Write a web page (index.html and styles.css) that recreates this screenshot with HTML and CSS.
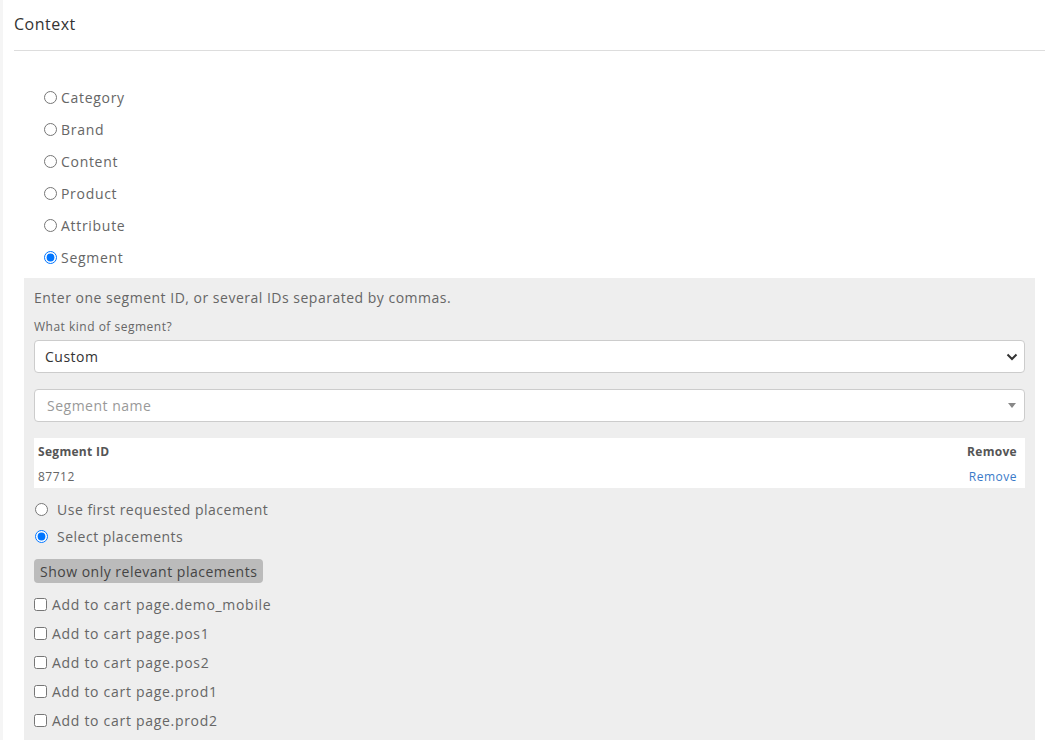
FILE: index.html
```html
<!DOCTYPE html>
<html>
<head>
<meta charset="utf-8">
<link rel="stylesheet" href="styles.css">
</head>
<body>
<div class="page">
  <div class="header">Context</div>
  <div class="types">
    <label class="type"><input type="radio" name="ctx"><span>Category</span></label>
    <label class="type"><input type="radio" name="ctx"><span>Brand</span></label>
    <label class="type"><input type="radio" name="ctx"><span>Content</span></label>
    <label class="type"><input type="radio" name="ctx"><span>Product</span></label>
    <label class="type"><input type="radio" name="ctx"><span>Attribute</span></label>
    <label class="type"><input type="radio" name="ctx" checked><span>Segment</span></label>
  </div>
  <div class="panel">
    <p class="hint">Enter one segment ID, or several IDs separated by commas.</p>
    <div class="small-label">What kind of segment?</div>
    <div class="select">
      <span>Custom</span>
      <svg width="12" height="8" viewBox="0 0 12 8"><path d="M1.5 1.5 L6 6 L10.5 1.5" fill="none" stroke="#333" stroke-width="2"/></svg>
    </div>
    <div class="select combo">
      <span class="ph">Segment name</span>
      <svg width="8" height="5" viewBox="0 0 8 5"><path d="M0 0 L8 0 L4 5 Z" fill="#888"/></svg>
    </div>
    <div class="table">
      <div class="trow thead"><span>Segment ID</span><span>Remove</span></div>
      <div class="trow"><span>87712</span><a class="link">Remove</a></div>
    </div>
    <label class="opt first"><input type="radio" name="pl"><span>Use first requested placement</span></label>
    <label class="opt"><input type="radio" name="pl" checked><span>Select placements</span></label>
    <button class="btn">Show only relevant placements</button>
    <div class="checks">
      <label class="chk"><input type="checkbox"><span>Add to cart page.demo_mobile</span></label>
      <label class="chk"><input type="checkbox"><span>Add to cart page.pos1</span></label>
      <label class="chk"><input type="checkbox"><span>Add to cart page.pos2</span></label>
      <label class="chk"><input type="checkbox"><span>Add to cart page.prod1</span></label>
      <label class="chk"><input type="checkbox"><span>Add to cart page.prod2</span></label>
    </div>
  </div>
</div>
</body>
</html>
```

FILE: styles.css
```css
* { box-sizing: border-box; }
html, body { margin: 0; padding: 0; background: #fff; }
body {
  font-family: "Open Sans", "Liberation Sans", sans-serif;
  color: #666;
  letter-spacing: 0.5px;
  height: 740px;
  overflow: hidden;
}
.page {
  padding: 0 9px 0 11px;
  border-left: 3px solid #f5f5f5;
}
.header {
  font-size: 16px;
  color: #333;
  height: 51px;
  padding-top: 13px;
  border-bottom: 1px solid #ddd;
}
.types {
  padding: 30px 0 0 30px;
  display: flex;
  flex-direction: column;
}
.type {
  display: flex;
  align-items: center;
  height: 32px;
  font-size: 14px;
  color: #666;
  letter-spacing: 0.7px;
}
.type input {
  margin: 0 4px 0 0;
  width: 13px;
  height: 13px;
}
.panel {
  margin: 5px 0 0 10px;
  width: 1011px;
  background: #eee;
  padding: 10px 10px 20px 10px;
}
.hint {
  margin: 0;
  font-size: 14px;
  line-height: 20px;
}
.small-label {
  font-size: 12px;
  margin-top: 11px;
  line-height: 16px;
}
.select {
  margin-top: 5px;
  height: 33px;
  background: #fff;
  border: 1px solid #ccc;
  border-radius: 4px;
  display: flex;
  align-items: center;
  justify-content: space-between;
  padding: 0 6px 0 10px;
  font-size: 14px;
  color: #333;
}
.combo {
  margin-top: 16px;
  padding: 0 8px 0 12px;
}
.ph { color: #999; }
.table {
  margin-top: 16px;
  background: #fff;
  height: 50px;
  padding: 1px 8px 0 4px;
  font-size: 12px;
}
.trow {
  display: flex;
  justify-content: space-between;
  height: 25px;
  align-items: center;
}
.thead { font-weight: 700; color: #555; letter-spacing: 0.3px; }
.link { color: #3a7bc8; }
.opt {
  display: flex;
  align-items: center;
  height: 27px;
  font-size: 14px;
}
.opt input {
  margin: 0 9px 0 1px;
  width: 13px;
  height: 13px;
}
.opt.first { margin-top: 8px; }
.btn {
  margin-top: 9px;
  font-family: inherit;
  letter-spacing: inherit;
  font-size: 14px;
  color: #444;
  background: #bbb;
  border: none;
  border-radius: 4px;
  height: 24px;
  padding: 0 6px;
}
.checks {
  margin-top: 7px;
  display: flex;
  flex-direction: column;
}
.chk {
  display: flex;
  align-items: center;
  height: 29px;
  font-size: 14px;
  letter-spacing: 0.7px;
}
.chk input {
  margin: 0 5px 0 0;
  width: 13px;
  height: 13px;
}
```
